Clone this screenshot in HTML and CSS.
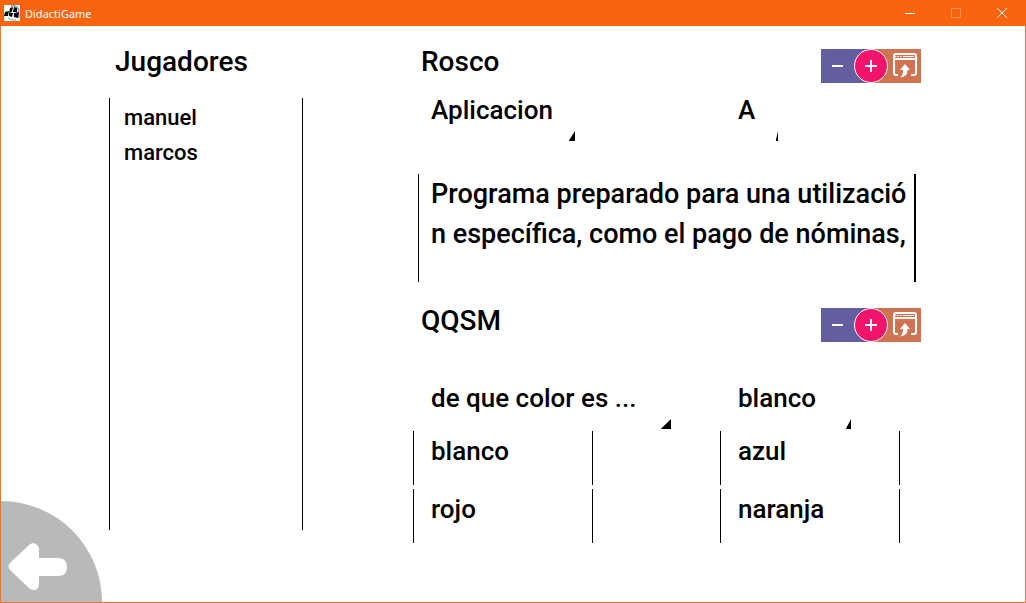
FILE: index.html
```html
<!DOCTYPE html>
<html lang="es">
<head>
<meta charset="utf-8">
<title>DidactiGame</title>
<link rel="stylesheet" href="styles.css">
</head>
<body>
<svg class="sprite" aria-hidden="true">
  <symbol id="icon-minus" viewBox="0 0 33 34"><path d="M11 17H22" fill="none" stroke="#fff" stroke-width="2"/></symbol>
  <symbol id="icon-plus" viewBox="0 0 34 34"><circle cx="17" cy="17" r="16.5" fill="#f0156b" stroke="#fff"/><path d="M11 17H23M17 11V23" fill="none" stroke="#fff" stroke-width="2"/></symbol>
  <symbol id="icon-import" viewBox="0 0 33 34"><path d="M10 26H8Q6 26 6 24V7Q6 5 8 5H26Q28 5 28 7V24Q28 26 26 26H23M6 10H28" fill="none" stroke="#fff" stroke-width="2"/><path d="M7 7.500H8.500M9.500 7.500H11M12 7.500H13.500M15 7.500H26" stroke="#fff" stroke-width="1"/><path d="M17 15L22 21H19.500Q20 28 12 28.500Q15.500 26 15 21H12Z" fill="#fff"/></symbol>
</svg>
<div class="window">
  <header class="titlebar">
    <svg class="app-icon" viewBox="0 0 16 16" aria-hidden="true"><rect width="16" height="16" fill="#fff"/><path d="M7 1Q12 0 14.500 4L15 13" fill="none" stroke="#6aa5c8" stroke-width="1.500"/><path d="M6 3L9 2L8 7L5 8ZM10 2L13 3V7L9 7ZM1 7L5 6L4 11L0 11ZM5 8L9 8L8 12L5 11ZM10 8L15 7L14 13L10 12Z" fill="#05080b"/><path d="M4 13Q8 16 12 15" fill="none" stroke="#6aa5c8"/></svg>
    <span class="app-name">DidactiGame</span>
    <button class="win-button" type="button" aria-label="Minimizar"><svg viewBox="0 0 12 12"><path d="M1 6.500H11"/></svg></button>
    <button class="win-button" type="button" aria-label="Maximizar" disabled><svg viewBox="0 0 12 12"><path d="M1.500 1.500H10.500V10.500H1.500Z"/></svg></button>
    <button class="win-button" type="button" aria-label="Cerrar"><svg viewBox="0 0 12 12"><path d="M1 1L11 11M11 1L1 11"/></svg></button>
  </header>

  <main class="content">
    <section class="players">
      <h2 class="heading">Jugadores</h2>
      <ul class="player-list">
        <li>manuel</li>
        <li>marcos</li>
      </ul>
    </section>

    <div class="games">
      <section class="game">
        <div class="game-header">
          <h2 class="heading">Rosco</h2>
          <div class="toolbar">
            <button type="button" aria-label="Quitar de Rosco"><svg><use href="#icon-minus"/></svg></button>
            <button type="button" aria-label="Añadir a Rosco"><svg><use href="#icon-plus"/></svg></button>
            <button type="button" aria-label="Importar en Rosco"><svg><use href="#icon-import"/></svg></button>
          </div>
        </div>
        <div class="pair">
          <span class="picker"><select aria-label="Palabra"><option>Aplicacion</option></select></span>
          <span class="picker"><select aria-label="Letra"><option>A</option></select></span>
        </div>
        <textarea class="definition" rows="2" aria-label="Definición" spellcheck="false">Programa preparado para una utilización específica, como el pago de nóminas,</textarea>
      </section>

      <section class="game quiz">
        <div class="game-header">
          <h2 class="heading">QQSM</h2>
          <div class="toolbar">
            <button type="button" aria-label="Quitar de QQSM"><svg><use href="#icon-minus"/></svg></button>
            <button type="button" aria-label="Añadir a QQSM"><svg><use href="#icon-plus"/></svg></button>
            <button type="button" aria-label="Importar en QQSM"><svg><use href="#icon-import"/></svg></button>
          </div>
        </div>
        <div class="pair">
          <span class="picker"><select aria-label="Pregunta"><option>de que color es ...</option></select></span>
          <span class="picker"><select aria-label="Respuesta correcta"><option>blanco</option></select></span>
        </div>
        <div class="pair answers">
          <input class="answer" type="text" value="blanco" aria-label="Respuesta 1">
          <input class="answer" type="text" value="azul" aria-label="Respuesta 2">
          <input class="answer" type="text" value="rojo" aria-label="Respuesta 3">
          <input class="answer" type="text" value="naranja" aria-label="Respuesta 4">
        </div>
      </section>
    </div>
  </main>

  <button class="back" type="button" aria-label="Volver"><svg viewBox="0 0 101 101"><path d="M0 0A101 101 0 0 1 101 101H0Z" fill="#b9b9b9"/><path d="M9 62L28 44C32 40 38 43 38 48V57H57Q66 57 66 66Q66 75 57 75H38V83C38 89 32 91 28 87L9 69Q6 65.500 9 62Z" fill="#fff"/></svg></button>
</div>
</body>
</html>
```
FILE: styles.css
```css
* { box-sizing: border-box; }

body {
  margin: 0;
  background: #fff;
  color: #000;
  font-family: Roboto, "Noto Sans", sans-serif;
  font-weight: 500;
}

button, select, input, textarea {
  font: inherit;
  color: inherit;
  background: none;
  border: 0;
  border-radius: 0;
  margin: 0;
  padding: 0;
}

.sprite { display: none; }

.window {
  position: relative;
  display: flex;
  flex-direction: column;
  min-height: 100vh;
  border: 1px solid #e87635;
  border-top: 0;
}

.titlebar {
  display: flex;
  align-items: center;
  height: 26px;
  margin: 0 -1px;
  padding: 0 1px 0 4px;
  background: #f9640f;
  color: #fff;
  font-family: "Noto Sans", sans-serif;
  font-size: 11px;
  font-weight: 400;
}

.app-icon { width: 16px; height: 16px; }
.app-name { flex: 1; margin-left: 5px; }

.win-button {
  display: flex;
  align-items: center;
  justify-content: center;
  width: 46px;
  height: 26px;
}

.win-button svg {
  width: 12px;
  height: 12px;
  fill: none;
  stroke: #fff;
}

.win-button:disabled { opacity: 0.3; }

.content {
  flex: 1;
  display: grid;
  grid-template-columns: minmax(0, 194fr) minmax(0, 508fr);
  column-gap: 110px;
  padding: 23px 104px 59px 108px;
}

.players {
  display: flex;
  flex-direction: column;
  padding-bottom: 13px;
}

.heading {
  margin: 0;
  font-size: 28px;
  font-weight: 500;
  line-height: 26px;
}

.players .heading {
  height: 34px;
  padding-left: 6px;
}

.player-list {
  flex: 1;
  margin: 15px 0 0;
  padding: 2px 14px;
  border: solid #000;
  border-width: 0 1px;
  list-style: none;
  font-size: 22px;
  line-height: 35px;
}

.games {
  display: flex;
  flex-direction: column;
  gap: 26px;
}

.game {
  display: flex;
  flex-direction: column;
}

.game-header {
  display: flex;
  justify-content: space-between;
  height: 34px;
  padding-left: 8px;
}

.toolbar {
  display: flex;
  height: 34px;
  background: linear-gradient(90deg, #625e9f 50%, #cf7350 50%);
}

.toolbar button { width: 33px; height: 34px; }
.toolbar button:nth-child(2) { width: 34px; }
.toolbar svg { display: block; width: 100%; height: 100%; }

.pair {
  display: grid;
  grid-template-columns: minmax(0, 1fr) minmax(0, 1fr);
  column-gap: 127px;
  padding-right: 21px;
  font-size: 26px;
}

.picker {
  position: relative;
  justify-self: start;
}

.picker::after {
  content: "";
  position: absolute;
  right: 0;
  bottom: 0;
  width: 4%;
  height: 10px;
  background: #000;
  clip-path: polygon(100% 0, 100% 100%, 0 100%);
  pointer-events: none;
}

.picker select {
  display: block;
  appearance: none;
  height: 58px;
  padding: 0 22px 4px 18px;
}

.definition {
  display: block;
  height: 108px;
  margin: 33px 5px 0;
  padding: 0 6px 0 12px;
  border: solid #000;
  border-width: 0 2px 0 1px;
  outline: 0;
  overflow: hidden;
  resize: none;
  font-size: 27px;
  line-height: 40px;
  word-break: break-all;
}

.quiz .pair:nth-child(2) { margin-top: 29px; }
.quiz .picker select { padding-right: 34px; }

.answers {
  row-gap: 4px;
  margin-top: 2px;
}

.answer {
  width: 100%;
  height: 54px;
  padding: 0 17px 14px;
  border: solid #000;
  border-width: 0 1px;
}

.back {
  position: absolute;
  left: 0;
  bottom: 0;
  width: 101px;
  height: 101px;
}

.back svg { display: block; }
```
